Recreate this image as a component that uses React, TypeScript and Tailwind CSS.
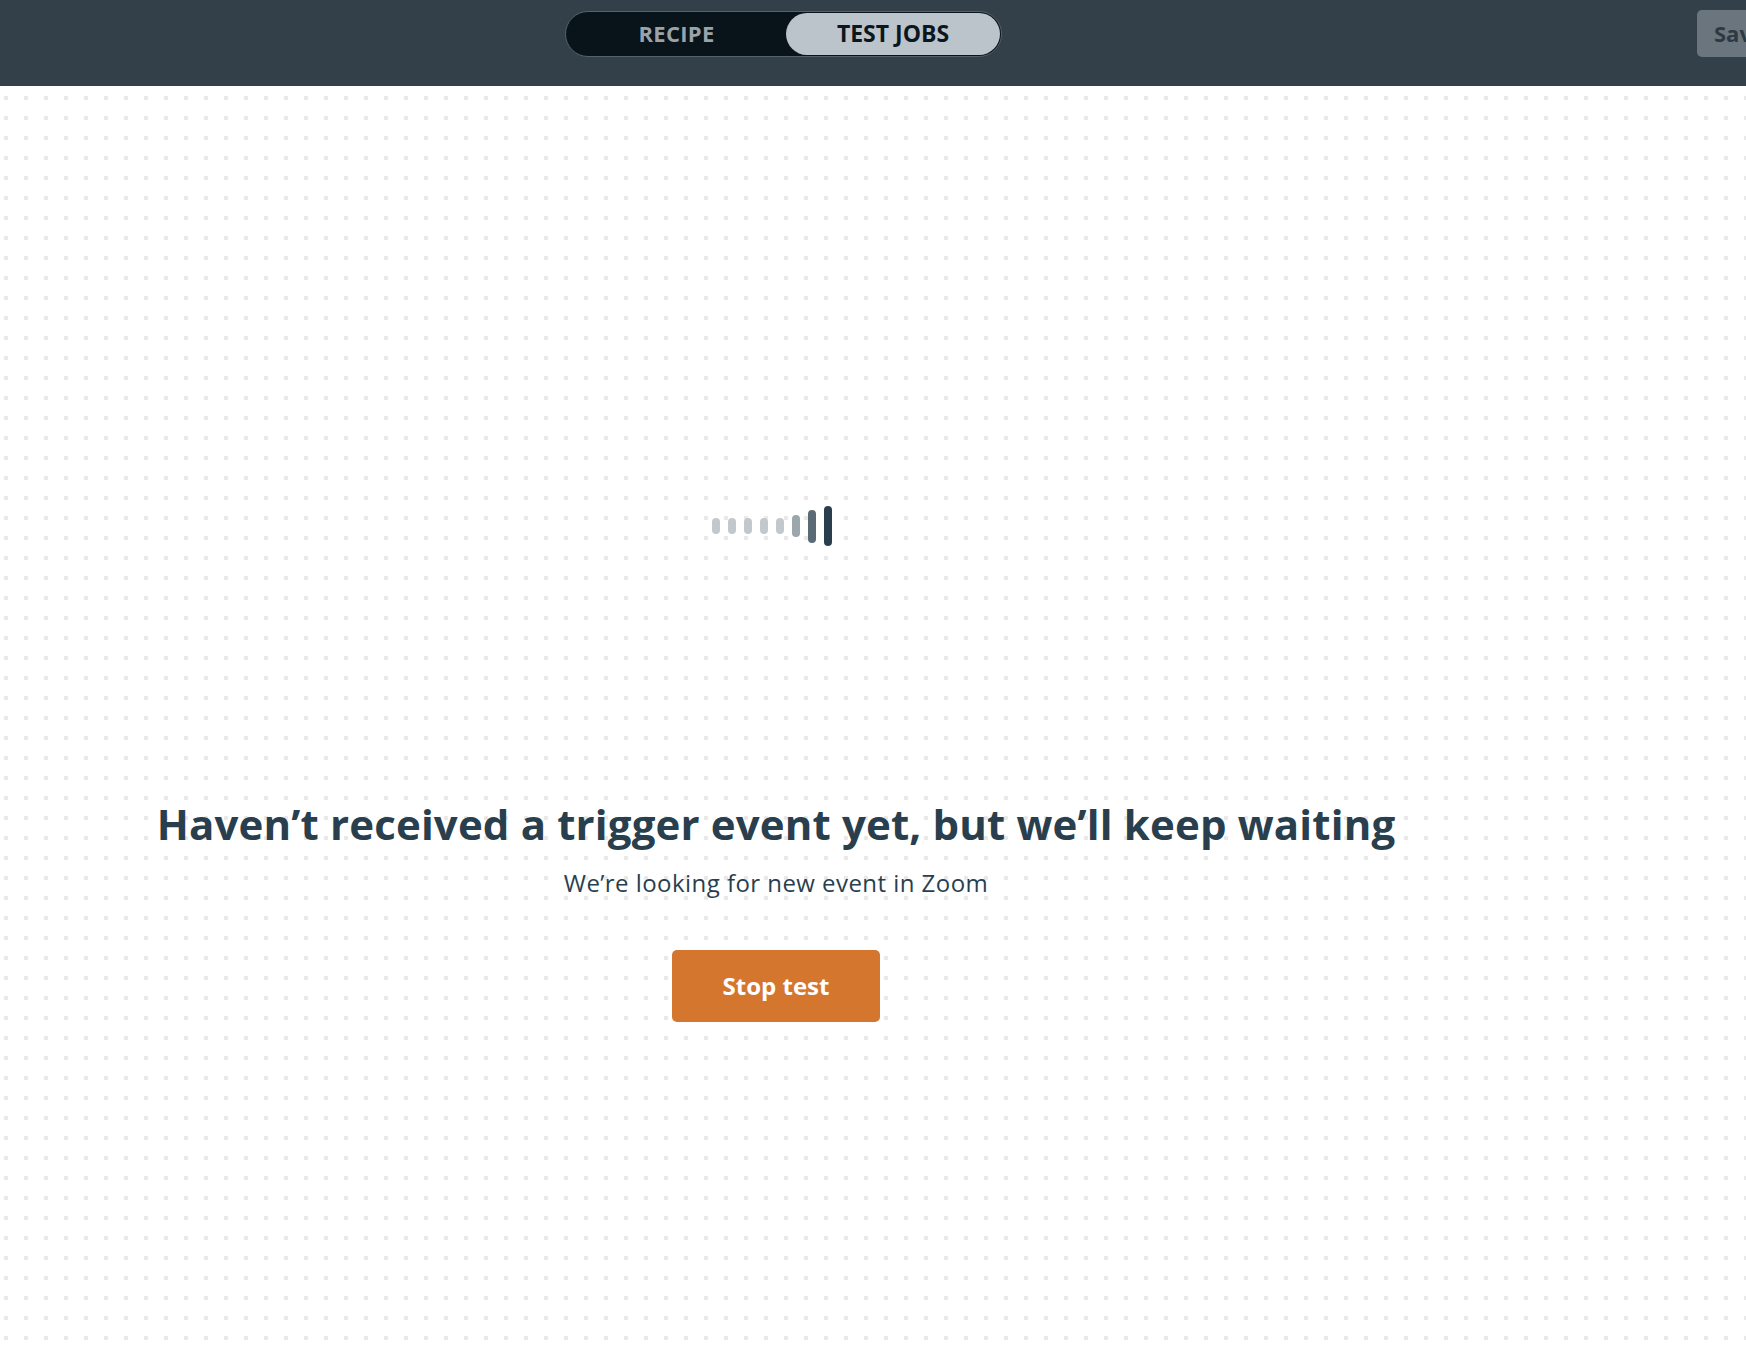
import React from "react";

const bars = [
  { h: "h-[16px]", c: "bg-[#c2c9ce]" },
  { h: "h-[16px]", c: "bg-[#c2c9ce]" },
  { h: "h-[16px]", c: "bg-[#c2c9ce]" },
  { h: "h-[16px]", c: "bg-[#c2c9ce]" },
  { h: "h-[16px]", c: "bg-[#c2c9ce]" },
  { h: "h-[22px]", c: "bg-[#9ba6ad]" },
  { h: "h-[33px]", c: "bg-[#5b6b76]" },
  { h: "h-[40px]", c: "bg-[#2a3f4e]" },
];

function Header() {
  return (
    <header className="flex h-[86px] items-start overflow-hidden bg-[#333f49] pt-[10px]">
      <div className="ml-[565px] mt-px flex h-[46px] w-[437px] shrink-0 items-center rounded-full border border-[#56616b] bg-[#08141a] p-px">
        <button className="flex h-full w-[219px] items-center justify-center pb-[2px] text-[22px] font-bold tracking-[0.3px] text-[#9aa3a9]">
          RECIPE
        </button>
        <button className="flex h-full flex-1 items-center justify-center rounded-full bg-[#bcc4cb] pb-[2px] text-[23px] font-bold text-[#0b171d]">
          TEST JOBS
        </button>
      </div>
      {/* cut off by the window */}
      <button className="ml-[695px] h-[47px] w-[110px] shrink-0 rounded-[5px] bg-[#6b757e] pl-[17px] text-left text-[22px] font-bold text-[#2d3a44]">
        Save
      </button>
    </header>
  );
}

function Loader() {
  return (
    <div className="-ml-[8px] flex h-[40px] items-center gap-[8px]">
      {bars.map((b, i) => (
        <span key={i} className={`w-[8px] rounded-full ${b.h} ${b.c}`} />
      ))}
    </div>
  );
}

export default function App() {
  return (
    <div className="min-h-[1354px] bg-white font-['Open_Sans',sans-serif] text-[#2a3f4e]">
      <Header />
      <main className="h-[1254px] bg-[radial-gradient(circle,#e8e8e8_2px,transparent_2.6px)] bg-[size:20px_20px] bg-[position:-4px_2px]">
        <div className="flex w-[1552px] flex-col items-center">
          <div className="mt-[420px]">
            <Loader />
          </div>
          <h1 className="mt-[252px] text-[42px] font-bold leading-[52px] tracking-[0.15px]">
            Haven’t received a trigger event yet, but we’ll keep waiting
          </h1>
          <p className="mt-[18px] text-[24px] leading-[30px] tracking-[0.45px]">
            We’re looking for new event in Zoom
          </p>
          <button className="mt-[52px] h-[72px] w-[208px] rounded-[5px] bg-[#d5762f] text-[24px] font-bold text-white">
            Stop test
          </button>
        </div>
      </main>
    </div>
  );
}
